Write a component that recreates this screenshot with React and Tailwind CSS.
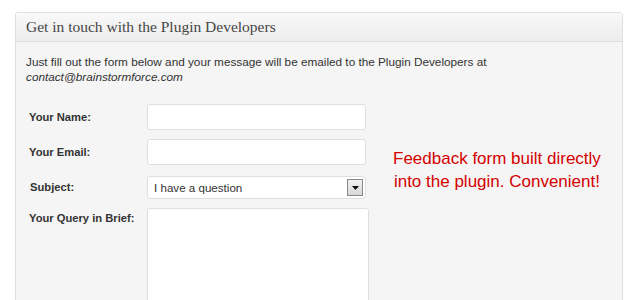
export default function App() {
  const fields = [
    { label: "Your Name:", gap: "mb-[9px]" },
    { label: "Your Email:", gap: "mb-[11px]" },
  ];

  return (
    <div className="h-[300px] w-[640px] overflow-hidden bg-white pl-[15px] pt-[12px] font-['Liberation_Sans',Arial,sans-serif]">
      <div className="h-[320px] w-[608px] rounded-t-[3px] border border-[#dfdfdf] bg-[#f5f5f5]">
        <div className="flex h-[29px] items-center border-b border-[#dfdfdf] bg-gradient-to-b from-[#f9f9f9] to-[#ececec] px-[10px] font-['Liberation_Serif',Georgia,serif] text-[15.5px] text-[#464646]">
          Get in touch with the Plugin Developers
        </div>
        <div className="px-[10px] pt-[12px] text-[11.75px] leading-[15px] text-[#333]">
          <p>Just fill out the form below and your message will be emailed to the Plugin Developers at</p>
          <p className="italic">contact@brainstormforce.com</p>
        </div>
        <div className="flex pt-[20px]">
          <div className="flex flex-col">
            {fields.map((f) => (
              <div key={f.label} className={`${f.gap} flex items-center`}>
                <span className="w-[131px] pl-[13px] text-[11.2px] font-bold text-[#333]">{f.label}</span>
                <div className="h-[26px] w-[219px] rounded-[3px] border border-[#dfdfdf] bg-white" />
              </div>
            ))}
            <div className="mb-[9px] flex items-center">
              <span className="w-[131px] pl-[14px] text-[11.2px] font-bold text-[#333]">Subject:</span>
              <div className="flex h-[23px] w-[219px] items-center justify-between rounded-[3px] border border-[#dfdfdf] bg-white pl-[6px] pr-[2px] text-[11.6px] text-[#333]">
                <span>I have a question</span>
                <div className="flex h-[17px] w-[16px] items-center justify-center border border-[#888] bg-gradient-to-b from-[#f3f3f3] to-[#d8d8d8]">
                  <svg width="7" height="4" viewBox="0 0 7 4">
                    <path d="M0 0h7L3.5 4z" fill="#111" />
                  </svg>
                </div>
              </div>
            </div>
            <div className="flex items-start">
              <span className="w-[131px] pl-[13px] pt-[2px] text-[11.2px] font-bold text-[#333]">Your Query in Brief:</span>
              <div className="h-[120px] w-[222px] rounded-[3px] border border-[#dfdfdf] bg-white" />
            </div>
          </div>
          <div className="pl-[24px] pt-[43px] text-center text-[17px] leading-[23px] text-[#d40000]">
            <p>Feedback form built directly</p>
            <p>into the plugin. Convenient!</p>
          </div>
        </div>
      </div>
    </div>
  );
}
